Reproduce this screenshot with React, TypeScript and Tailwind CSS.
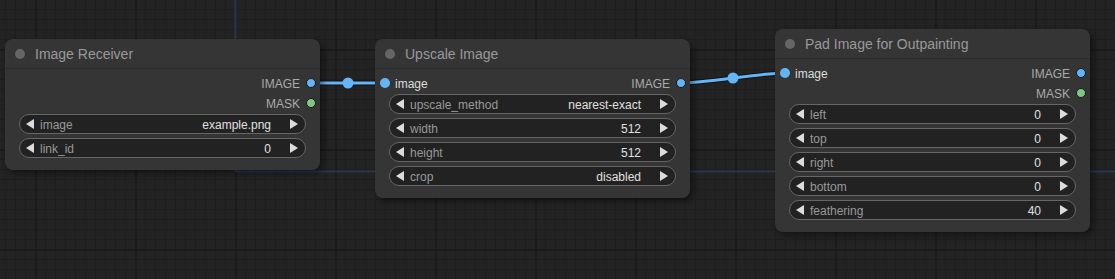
import React from "react";

type Slot = { label: string; color: string };
type W = { label: string; value: string };

function Tri({ dir }: { dir: "l" | "r" }) {
  return (
    <svg width="8" height="10" viewBox="0 0 8 10" className="shrink-0">
      {dir === "l" ? <polygon points="8,0 8,10 0,5" fill="#dddddd" /> : <polygon points="0,0 0,10 8,5" fill="#dddddd" />}
    </svg>
  );
}

function Widget({ label, value }: W) {
  return (
    <div className="flex h-5 items-center rounded-full border border-[#666666] bg-[#222222] pl-[6px] pr-[7px] text-[12px] leading-none">
      <Tri dir="l" />
      <span className="ml-[6px] pt-[1px] text-[#999999]">{label}</span>
      <span className="ml-auto pt-[1px] text-[#e0e0e0]">{value}</span>
      <span className="ml-[19px] flex">
        <Tri dir="r" />
      </span>
    </div>
  );
}

function Dot({ color, ring }: { color: string; ring?: boolean }) {
  return (
    <span
      className={`block h-[10px] w-[10px] shrink-0 rounded-full ${ring ? "border border-[#1a1a1a]" : ""}`}
      style={{ backgroundColor: color }}
    />
  );
}

function Node({
  title,
  x,
  y,
  input,
  outputs,
  widgets,
}: {
  title: string;
  x: number;
  y: number;
  input?: Slot;
  outputs: Slot[];
  widgets: W[];
}) {
  const rows = Math.max(input ? 1 : 0, outputs.length);
  return (
    <div
      className="absolute w-[315px] rounded-[8px] bg-[#353535] pb-[12px] shadow-[3px_3px_6px_rgba(0,0,0,0.45)]"
      style={{ left: x, top: y }}
    >
      <div className="flex h-[30px] items-center border-b border-[#2c2c2c] pl-[10px]">
        <span className="h-[10px] w-[10px] rounded-full bg-[#666666]" />
        <span className="ml-[10px] pt-[2px] text-[14px] text-[#999999]">{title}</span>
      </div>
      <div className="pt-[4px]">
        {Array.from({ length: rows }).map((_, i) => (
          <div key={i} className="flex h-5 items-center text-[12px] text-[#aaaaaa]">
            <div className="flex items-center pl-[5px]">
              {i === 0 && input ? (
                <>
                  <Dot color={input.color} />
                  <span className="ml-[5px] pt-[1px] text-[#dddddd]">{input.label}</span>
                </>
              ) : null}
            </div>
            <div className="ml-auto flex items-center pr-[4px]">
              {outputs[i] ? (
                <>
                  <span className="pt-[1px]">{outputs[i].label}</span>
                  <span className="ml-[6px]">
                    <Dot color={outputs[i].color} ring />
                  </span>
                </>
              ) : null}
            </div>
          </div>
        ))}
        <div className="mt-[1px] flex flex-col gap-1 px-[14px]">
          {widgets.map((w) => (
            <Widget key={w.label} {...w} />
          ))}
        </div>
      </div>
    </div>
  );
}

const BLUE = "#64b5f6";
const GREEN = "#81c784";

export default function App() {
  return (
    <div
      className="relative h-[279px] w-[1115px] overflow-hidden bg-[#232323] font-['Liberation_Sans',Arial,sans-serif] [background-image:linear-gradient(90deg,#1b1b1b_2px,transparent_2px),linear-gradient(#1b1b1b_2px,transparent_2px),linear-gradient(90deg,#1e1e1e_1px,transparent_1px),linear-gradient(#1e1e1e_1px,transparent_1px)] [background-size:100px_100px,100px_100px,10px_10px,10px_10px] [background-position:35px_49px,35px_49px,5px_9px,5px_9px]"
    >
      <svg className="pointer-events-none absolute left-0 top-0" width="1115" height="279">
        <line x1="235.5" y1="0" x2="235.5" y2="171" stroke="#2a3552" strokeWidth="2" />
        <line x1="235" y1="171.5" x2="1115" y2="171.5" stroke="#2a3552" strokeWidth="2" />
        <path d="M311 83 L385 83" stroke="rgba(0,0,0,0.55)" strokeWidth="5" fill="none" />
        <path d="M311 83 L385 83" stroke={BLUE} strokeWidth="3" fill="none" />
        <circle cx="348" cy="83" r="5.5" fill={BLUE} />
        <path d="M681 83 C707 83 759 73 785 73" stroke="rgba(0,0,0,0.55)" strokeWidth="5" fill="none" />
        <path d="M681 83 C707 83 759 73 785 73" stroke={BLUE} strokeWidth="3" fill="none" />
        <circle cx="733" cy="78" r="5.5" fill={BLUE} />
      </svg>
      <Node
        title="Image Receiver"
        x={5}
        y={39}
        outputs={[
          { label: "IMAGE", color: BLUE },
          { label: "MASK", color: GREEN },
        ]}
        widgets={[
          { label: "image", value: "example.png" },
          { label: "link_id", value: "0" },
        ]}
      />
      <Node
        title="Upscale Image"
        x={375}
        y={39}
        input={{ label: "image", color: BLUE }}
        outputs={[{ label: "IMAGE", color: BLUE }]}
        widgets={[
          { label: "upscale_method", value: "nearest-exact" },
          { label: "width", value: "512" },
          { label: "height", value: "512" },
          { label: "crop", value: "disabled" },
        ]}
      />
      <Node
        title="Pad Image for Outpainting"
        x={775}
        y={29}
        input={{ label: "image", color: BLUE }}
        outputs={[
          { label: "IMAGE", color: BLUE },
          { label: "MASK", color: GREEN },
        ]}
        widgets={[
          { label: "left", value: "0" },
          { label: "top", value: "0" },
          { label: "right", value: "0" },
          { label: "bottom", value: "0" },
          { label: "feathering", value: "40" },
        ]}
      />
    </div>
  );
}
